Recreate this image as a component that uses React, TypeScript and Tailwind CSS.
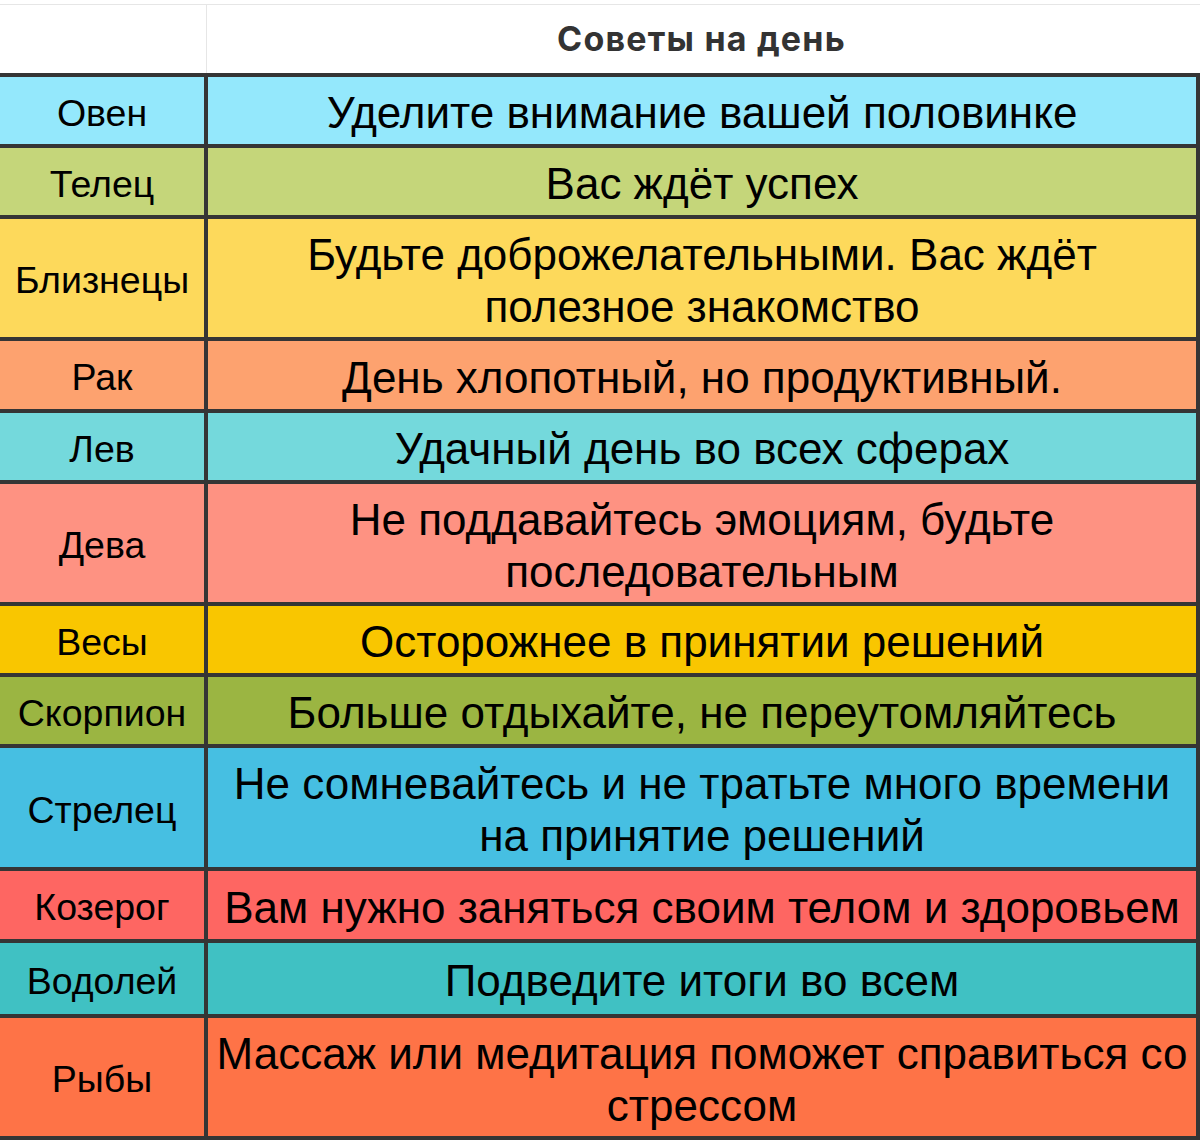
import React from 'react';

interface Row {
  sign: string;
  lines: string[];
  bg: string;
  h: string;
}

// heights include the 4px bottom border
const rows: Row[] = [
  { sign: 'Овен', lines: ['Уделите внимание вашей половинке'], bg: 'bg-[#94e8fc]', h: 'h-[71px]' },
  { sign: 'Телец', lines: ['Вас ждёт успех'], bg: 'bg-[#c5d67a]', h: 'h-[71px]' },
  { sign: 'Близнецы', lines: ['Будьте доброжелательными. Вас ждёт', 'полезное знакомство'], bg: 'bg-[#fdd95b]', h: 'h-[122px]' },
  { sign: 'Рак', lines: ['День хлопотный, но продуктивный.'], bg: 'bg-[#fda26f]', h: 'h-[72px]' },
  { sign: 'Лев', lines: ['Удачный день во всех сферах'], bg: 'bg-[#74d9dc]', h: 'h-[71px]' },
  { sign: 'Дева', lines: ['Не поддавайтесь эмоциям, будьте', 'последовательным'], bg: 'bg-[#fe9282]', h: 'h-[122px]' },
  { sign: 'Весы', lines: ['Осторожнее в принятии решений'], bg: 'bg-[#f9c600]', h: 'h-[71px]' },
  { sign: 'Скорпион', lines: ['Больше отдыхайте, не переутомляйтесь'], bg: 'bg-[#9bb542]', h: 'h-[71px]' },
  { sign: 'Стрелец', lines: ['Не сомневайтесь и не тратьте много времени', 'на принятие решений'], bg: 'bg-[#46bfe2]', h: 'h-[123px]' },
  { sign: 'Козерог', lines: ['Вам нужно заняться своим телом и здоровьем'], bg: 'bg-[#fe6662]', h: 'h-[72px]' },
  { sign: 'Водолей', lines: ['Подведите итоги во всем'], bg: 'bg-[#40c1c3]', h: 'h-[75px]' },
  { sign: 'Рыбы', lines: ['Массаж или медитация поможет справиться со', 'стрессом'], bg: 'bg-[#fe7347]', h: 'h-[118px]' },
];

const App: React.FC = () => {
  return (
    <div className="w-[1200px] h-[1140px] bg-white overflow-hidden font-['Liberation_Sans',Arial,sans-serif] text-black">
      {/* header */}
      <div className="pt-[4px]">
        <div className="flex h-[69px] border-t border-[#e6e6e6]">
          <div className="w-[207px] border-r border-[#e6e6e6]" />
          <div className="flex-1 flex items-center justify-center pb-[2px] pr-[4px] font-['Inter',sans-serif] font-bold text-[34px] text-[#333333] tracking-[1.2px]">
            Советы на день
          </div>
        </div>
      </div>

      {/* table */}
      <div className="border-t-4 border-r-4 border-b-4 border-[#353535]">
        {rows.map((r, i) => (
          <div
            key={r.sign}
            className={`flex ${r.bg} ${r.h} ${i < rows.length - 1 ? 'border-b-4 border-[#353535]' : ''}`}
          >
            <div className="w-[208px] shrink-0 border-r-4 border-[#353535] flex items-center justify-center pt-[5px] text-[37.5px]">
              {r.sign}
            </div>
            <div className="flex-1 flex flex-col items-center justify-center pt-[5px] text-[44px] leading-[52px]">
              {r.lines.map(l => (
                <span key={l} className="whitespace-nowrap">{l}</span>
              ))}
            </div>
          </div>
        ))}
      </div>
    </div>
  );
};

export default App;
